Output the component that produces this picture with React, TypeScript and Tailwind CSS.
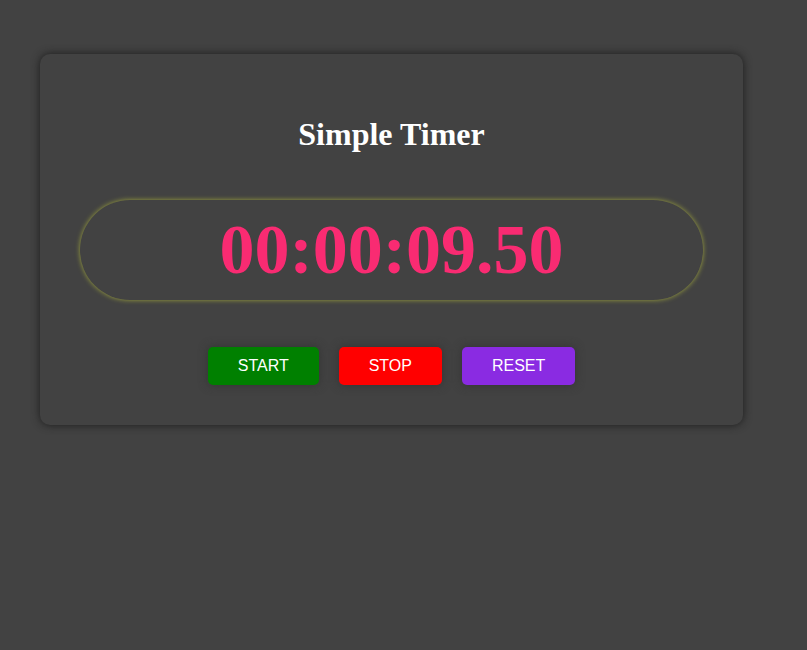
import { useEffect, useRef, useState } from "react";

const pad = (n: number) => String(n).padStart(2, "0");

function format(cs: number) {
  const s = Math.floor(cs / 100);
  return `${pad(Math.floor(s / 3600))}:${pad(Math.floor(s / 60) % 60)}:${pad(s % 60)}.${pad(cs % 100)}`;
}

const buttonClass =
  "cursor-pointer rounded-[5px] px-[30px] py-[10px] text-[16px] leading-[18px] text-white shadow-[0_0_10px_#333333]";

export default function App() {
  const [time, setTime] = useState(950);
  const [running, setRunning] = useState(false);
  const origin = useRef(0);

  useEffect(() => {
    if (!running) return;
    const id = setInterval(() => setTime(Math.floor((Date.now() - origin.current) / 10)), 10);
    return () => clearInterval(id);
  }, [running]);

  const start = () => {
    origin.current = Date.now() - time * 10;
    setRunning(true);
  };
  const reset = () => {
    setRunning(false);
    setTime(0);
  };

  return (
    <div className="min-h-screen bg-[#424242] pt-[54px] pr-16 pl-10 font-['Liberation_Serif',serif]">
      <main className="rounded-[10px] px-10 pt-[62px] pb-10 text-center shadow-[0_0_8px_#1c1c1c]">
        <h1 className="text-[32px] leading-[37px] font-bold text-white">Simple Timer</h1>
        <div className="mt-[47px] rounded-[50px] py-2 text-[70px] leading-[84px] font-bold text-[#f92b72] shadow-[0_0_5px_#9da33c]">
          <time>{format(time)}</time>
        </div>
        <div className="mt-[47px] flex flex-wrap justify-center gap-5 font-['Liberation_Sans',sans-serif]">
          <button type="button" onClick={start} className={`${buttonClass} bg-[#008000]`}>START</button>
          <button type="button" onClick={() => setRunning(false)} className={`${buttonClass} bg-[#ff0000]`}>STOP</button>
          <button type="button" onClick={reset} className={`${buttonClass} bg-[#8a2be2]`}>RESET</button>
        </div>
      </main>
    </div>
  );
}
